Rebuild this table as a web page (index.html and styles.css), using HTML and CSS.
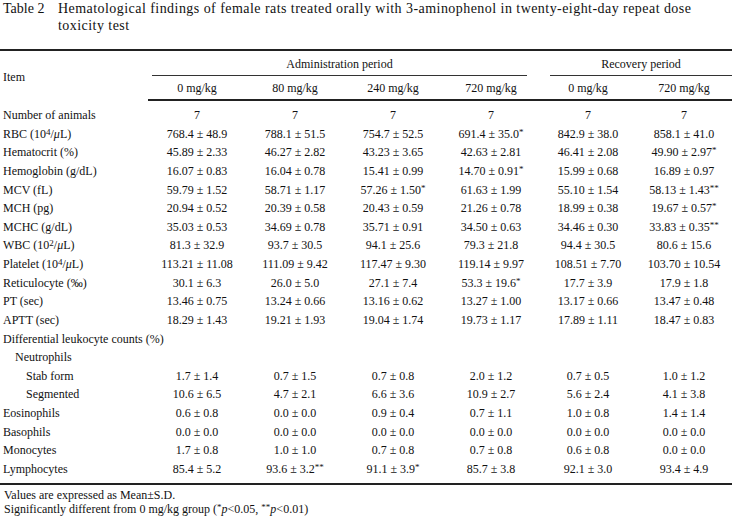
FILE: index.html
```html
<!DOCTYPE html>
<html lang="en">
<head>
<meta charset="utf-8">
<title>Table 2</title>
<link rel="stylesheet" href="styles.css">
</head>
<body>
<div class="caption">
  <div class="caption-label">Table 2</div>
  <div class="caption-text">Hematological findings of female rats treated orally with 3-aminophenol in twenty-eight-day repeat dose<br>toxicity test</div>
</div>
<table class="data">
  <colgroup>
    <col class="c-item">
    <col class="c-adm"><col class="c-adm"><col class="c-adm"><col class="c-adm">
    <col class="c-rec"><col class="c-rec">
  </colgroup>
  <thead>
    <tr class="h1">
      <th rowspan="2" class="item-h">Item</th>
      <th colspan="4"><div class="span adm">Administration period</div></th>
      <th colspan="2"><div class="span rec">Recovery period</div></th>
    </tr>
    <tr class="h2">
      <th>0 mg/kg</th><th>80 mg/kg</th><th>240 mg/kg</th><th>720 mg/kg</th>
      <th>0 mg/kg</th><th>720 mg/kg</th>
    </tr>
  </thead>
  <tbody>
    <tr class="first"><td>Number of animals</td><td>7</td><td>7</td><td>7</td><td>7</td><td>7</td><td>7</td></tr>
    <tr><td>RBC (10<sup>4</sup>/<i>μ</i>L)</td><td>768.4 ± 48.9</td><td>788.1 ± 51.5</td><td>754.7 ± 52.5</td><td>691.4 ± 35.0<sup>*</sup></td><td>842.9 ± 38.0</td><td>858.1 ± 41.0</td></tr>
    <tr><td>Hematocrit (%)</td><td>45.89 ± 2.33</td><td>46.27 ± 2.82</td><td>43.23 ± 3.65</td><td>42.63 ± 2.81</td><td>46.41 ± 2.08</td><td>49.90 ± 2.97<sup>*</sup></td></tr>
    <tr><td>Hemoglobin (g/dL)</td><td>16.07 ± 0.83</td><td>16.04 ± 0.78</td><td>15.41 ± 0.99</td><td>14.70 ± 0.91<sup>*</sup></td><td>15.99 ± 0.68</td><td>16.89 ± 0.97</td></tr>
    <tr><td>MCV (fL)</td><td>59.79 ± 1.52</td><td>58.71 ± 1.17</td><td>57.26 ± 1.50<sup>*</sup></td><td>61.63 ± 1.99</td><td>55.10 ± 1.54</td><td>58.13 ± 1.43<sup>**</sup></td></tr>
    <tr><td>MCH (pg)</td><td>20.94 ± 0.52</td><td>20.39 ± 0.58</td><td>20.43 ± 0.59</td><td>21.26 ± 0.78</td><td>18.99 ± 0.38</td><td>19.67 ± 0.57<sup>*</sup></td></tr>
    <tr><td>MCHC (g/dL)</td><td>35.03 ± 0.53</td><td>34.69 ± 0.78</td><td>35.71 ± 0.91</td><td>34.50 ± 0.63</td><td>34.46 ± 0.30</td><td>33.83 ± 0.35<sup>**</sup></td></tr>
    <tr><td>WBC (10<sup>2</sup>/<i>μ</i>L)</td><td>81.3 ± 32.9</td><td>93.7 ± 30.5</td><td>94.1 ± 25.6</td><td>79.3 ± 21.8</td><td>94.4 ± 30.5</td><td>80.6 ± 15.6</td></tr>
    <tr><td>Platelet (10<sup>4</sup>/<i>μ</i>L)</td><td>113.21 ± 11.08</td><td>111.09 ± 9.42</td><td>117.47 ± 9.30</td><td>119.14 ± 9.97</td><td>108.51 ± 7.70</td><td>103.70 ± 10.54</td></tr>
    <tr><td>Reticulocyte (‰)</td><td>30.1 ± 6.3</td><td>26.0 ± 5.0</td><td>27.1 ± 7.4</td><td>53.3 ± 19.6<sup>*</sup></td><td>17.7 ± 3.9</td><td>17.9 ± 1.8</td></tr>
    <tr><td>PT (sec)</td><td>13.46 ± 0.75</td><td>13.24 ± 0.66</td><td>13.16 ± 0.62</td><td>13.27 ± 1.00</td><td>13.17 ± 0.66</td><td>13.47 ± 0.48</td></tr>
    <tr><td>APTT (sec)</td><td>18.29 ± 1.43</td><td>19.21 ± 1.93</td><td>19.04 ± 1.74</td><td>19.73 ± 1.17</td><td>17.89 ± 1.11</td><td>18.47 ± 0.83</td></tr>
    <tr><td colspan="7" class="wide">Differential leukocyte counts (%)</td></tr>
    <tr><td colspan="7" class="ind1">Neutrophils</td></tr>
    <tr><td class="ind2">Stab form</td><td>1.7 ± 1.4</td><td>0.7 ± 1.5</td><td>0.7 ± 0.8</td><td>2.0 ± 1.2</td><td>0.7 ± 0.5</td><td>1.0 ± 1.2</td></tr>
    <tr><td class="ind2">Segmented</td><td>10.6 ± 6.5</td><td>4.7 ± 2.1</td><td>6.6 ± 3.6</td><td>10.9 ± 2.7</td><td>5.6 ± 2.4</td><td>4.1 ± 3.8</td></tr>
    <tr><td>Eosinophils</td><td>0.6 ± 0.8</td><td>0.0 ± 0.0</td><td>0.9 ± 0.4</td><td>0.7 ± 1.1</td><td>1.0 ± 0.8</td><td>1.4 ± 1.4</td></tr>
    <tr><td>Basophils</td><td>0.0 ± 0.0</td><td>0.0 ± 0.0</td><td>0.0 ± 0.0</td><td>0.0 ± 0.0</td><td>0.0 ± 0.0</td><td>0.0 ± 0.0</td></tr>
    <tr><td>Monocytes</td><td>1.7 ± 0.8</td><td>1.0 ± 1.0</td><td>0.7 ± 0.8</td><td>0.7 ± 0.8</td><td>0.6 ± 0.8</td><td>0.0 ± 0.0</td></tr>
    <tr class="last"><td>Lymphocytes</td><td>85.4 ± 5.2</td><td>93.6 ± 3.2<sup>**</sup></td><td>91.1 ± 3.9<sup>*</sup></td><td>85.7 ± 3.8</td><td>92.1 ± 3.0</td><td>93.4 ± 4.9</td></tr>
  </tbody>
</table>
<div class="notes">
  <p>Values are expressed as Mean±S.D.</p>
  <p>Significantly different from 0 mg/kg group (<sup>*</sup><i>p</i>&lt;0.05, <sup>**</sup><i>p</i>&lt;0.01)</p>
</div>
</body>
</html>
```
FILE: styles.css
```css
html, body {
  margin: 0;
  padding: 0;
  background: #ffffff;
}
body {
  width: 732px;
  font-family: "Liberation Serif", "Times New Roman", serif;
  color: #111111;
  font-size: 12px;
}
.caption {
  display: flex;
  font-size: 14px;
  line-height: 17px;
  padding-left: 3px;
}
.caption-label {
  width: 55px;
  flex: none;
}
.caption-text {
  flex: 1;
  letter-spacing: 0.45px;
  white-space: nowrap;
}
.data {
  margin-top: 15px;
  width: 732px;
  border-collapse: collapse;
  table-layout: fixed;
  border-top: 2px solid #222;
  border-bottom: 2px solid #222;
}
.c-item { width: 148px; }
.c-adm { width: 98px; }
.c-rec { width: 96px; }
th {
  font-weight: normal;
  padding: 0;
  text-align: center;
}
.h1 th { height: 26px; vertical-align: top; }
.h1 th.item-h {
  vertical-align: middle;
  text-align: left;
  padding-left: 3px;
  padding-top: 3px;
}
.span {
  padding-top: 5px;
  line-height: 16px;
  padding-bottom: 3px;
  border-bottom: 1.5px solid #333;
}
.span.adm { margin-left: 4px; margin-right: 13px; }
.span.rec { margin-left: 10px; margin-right: 0; }
.h2 th {
  height: 22px;
  line-height: 22px;
  border-bottom: 2px solid #222;
}
td {
  padding: 0;
  line-height: 18.63px;
  text-align: center;
  white-space: nowrap;
}
td:first-child {
  text-align: left;
  padding-left: 3px;
}
td.ind1 { padding-left: 15px; }
td.ind2 { padding-left: 26px; }
tr.first td { padding-top: 5px; }
tr.last td { padding-bottom: 4px; }
sup {
  font-size: 9px;
  line-height: 0;
  vertical-align: 3px;
}
.notes {
  margin-top: 3px;
  padding-left: 4px;
}
.notes p {
  margin: 0;
  line-height: 14px;
}
```
